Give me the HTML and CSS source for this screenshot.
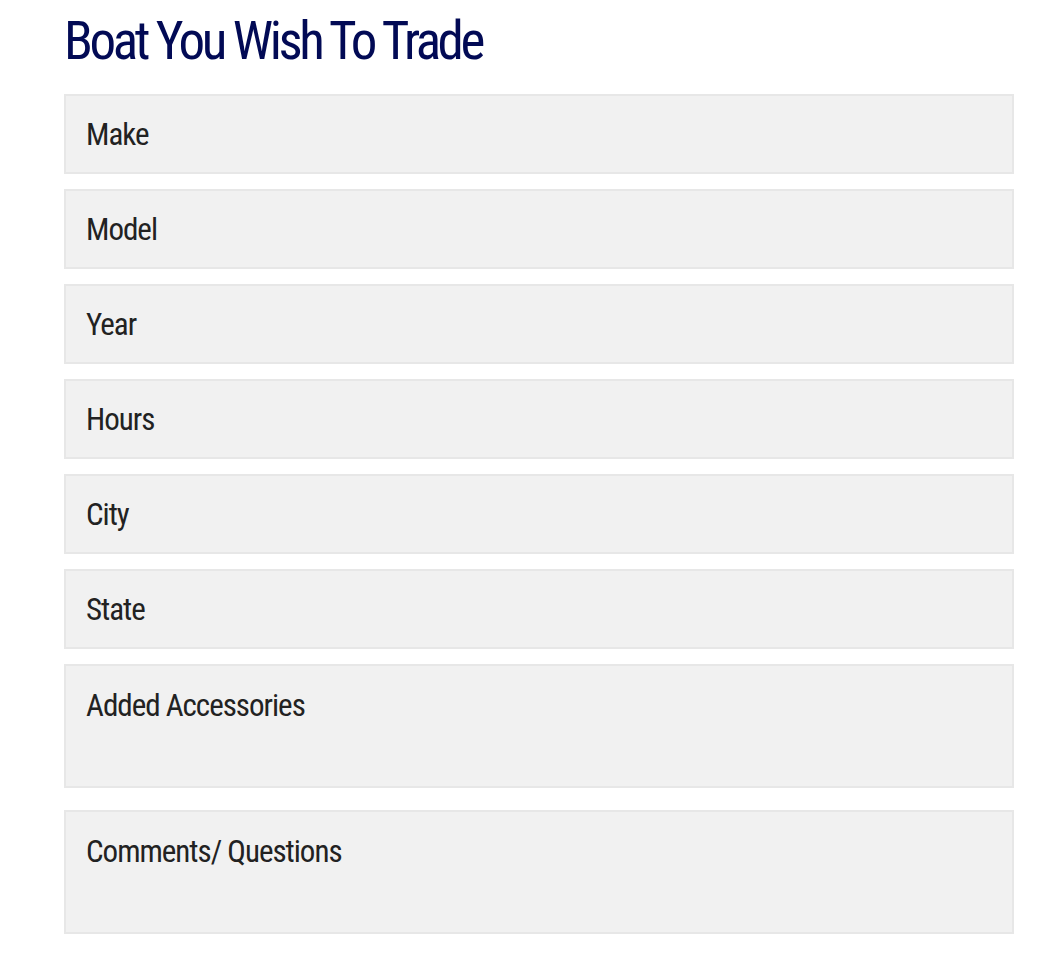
FILE: index.html
```html
<!DOCTYPE html>
<html lang="en">
<head>
    <meta charset="UTF-8">
    <meta name="viewport" content="width=device-width, initial-scale=1.0">
    <title>Boat You Wish To Trade</title>
    <link rel="stylesheet" href="styles.css">
</head>
<body>
    <div class="trade-form">
        <h2>Boat You Wish To Trade</h2>
        <form class="fields">
            <input type="text" name="make" placeholder="Make">
            <input type="text" name="model" placeholder="Model">
            <input type="text" name="year" placeholder="Year">
            <input type="text" name="hours" placeholder="Hours">
            <input type="text" name="city" placeholder="City">
            <input type="text" name="state" placeholder="State">
            <textarea name="accessories" placeholder="Added Accessories"></textarea>
            <textarea name="comments" placeholder="Comments/ Questions"></textarea>
        </form>
    </div>
</body>
</html>
```

FILE: styles.css
```css
body {
    font-family: "Roboto Condensed", "DejaVu Sans Condensed", sans-serif;
    background-color: #fff;
    margin: 0;
}
.trade-form {
    width: 950px;
    padding: 0 0 0 64px;
}
h2 {
    color: #020a55;
    font-size: 53px;
    font-weight: normal;
    letter-spacing: -3.4px;
    line-height: 1;
    margin: 0;
    padding: 15px 0 0;
    height: 94px;
    box-sizing: border-box;
}
.fields {
    display: flex;
    flex-direction: column;
    gap: 15px;
}
.fields input,
.fields textarea {
    font-family: inherit;
    font-size: 31px;
    letter-spacing: -1px;
    color: #222;
    background-color: #f1f1f1;
    border: 2px solid #e7e7e7;
    border-radius: 0;
    margin: 0;
    padding: 0 20px;
    height: 80px;
    box-sizing: border-box;
    outline: none;
}
.fields textarea {
    height: 124px;
    padding: 21px 20px;
    line-height: 1.2;
    resize: none;
}
.fields textarea + textarea {
    margin-top: 7px;
}
.fields input::placeholder,
.fields textarea::placeholder {
    color: #222;
    opacity: 1;
}
```
